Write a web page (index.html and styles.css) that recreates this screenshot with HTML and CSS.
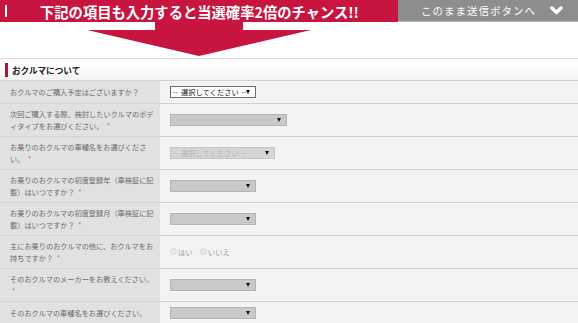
FILE: index.html
```html
<!DOCTYPE html>
<html lang="ja">
<head>
    <meta charset="UTF-8">
    <meta name="viewport" content="width=device-width, initial-scale=1.0">
    <title>おクルマについて</title>
    <link rel="stylesheet" href="styles.css">
</head>
<body>
    <div class="banner">
        <div class="banner-main"><span class="banner-mark"></span>下記の項目も入力すると当選確率2倍のチャンス!!</div>
        <a class="banner-jump" href="#submit">このまま送信ボタンへ<svg class="chevron" width="13" height="9" viewBox="0 0 13 9"><path d="M2 2 L6.5 6.5 L11 2" fill="none" stroke="#fff" stroke-width="3.4" stroke-linejoin="round" stroke-linecap="round"/></svg></a>
    </div>
    <div class="pointer">
        <svg width="224" height="34" viewBox="0 0 224 34"><rect x="68" y="0" width="88" height="9" fill="#c8153f"/><polygon points="0,8 224,8 112,34" fill="#c8153f"/></svg>
    </div>

    <div class="section-title"><span class="section-mark"></span>おクルマについて</div>
    <table class="fields">
        <tr>
            <th>おクルマのご購入予定はございますか？</th>
            <td><span class="select white w85"><select><option>-- 選択してください --</option></select></span></td>
        </tr>
        <tr>
            <th>次回ご購入する際、検討したいクルマのボディタイプをお選びください。 <span class="req">*</span></th>
            <td><span class="select w117"><select><option></option></select></span></td>
        </tr>
        <tr>
            <th>お乗りのおクルマの車種名をお選びください。 <span class="req">*</span></th>
            <td><span class="select w105"><select disabled><option>-- 選択してください --</option></select></span></td>
        </tr>
        <tr>
            <th>お乗りのおクルマの初度登録年（車検証に記載）はいつですか？ <span class="req">*</span></th>
            <td><span class="select w85"><select><option></option></select></span></td>
        </tr>
        <tr>
            <th>お乗りのおクルマの初度登録月（車検証に記載）はいつですか？ <span class="req">*</span></th>
            <td><span class="select w85"><select><option></option></select></span></td>
        </tr>
        <tr>
            <th>主にお乗りのおクルマの他に、おクルマをお持ちですか？ <span class="req">*</span></th>
            <td>
                <label class="radio"><input type="radio" name="other">はい</label>
                <label class="radio"><input type="radio" name="other">いいえ</label>
            </td>
        </tr>
        <tr>
            <th>そのおクルマのメーカーをお教えください。 <span class="req">*</span></th>
            <td><span class="select w85"><select><option></option></select></span></td>
        </tr>
        <tr>
            <th>そのおクルマの車種名をお選びください。</th>
            <td><span class="select w85"><select><option></option></select></span></td>
        </tr>
    </table>
</body>
</html>
```

FILE: styles.css
```css
body {
    margin: 0;
    font-family: "Noto Sans CJK JP", "Noto Sans", sans-serif;
    background: #fff;
    overflow: hidden;
}
.banner {
    display: flex;
    height: 22px;
}
.banner-main {
    width: 398px;
    background: #c8153f;
    color: #fff;
    font-size: 14.3px;
    font-weight: 700;
    display: flex;
    align-items: center;
    white-space: nowrap;
}
.banner-mark {
    width: 2px;
    height: 12px;
    background: #fff;
    margin: 0 33px 0 5px;
}
.banner-jump {
    flex: 1;
    background: #8d8d8d;
    border-bottom: 1px solid #b8b8b8;
    color: #fff;
    font-size: 10.5px;
    letter-spacing: 1px;
    display: flex;
    align-items: center;
    padding-left: 23px;
    text-decoration: none;
    white-space: nowrap;
}
.chevron {
    margin-left: 14px;
}
.pointer {
    width: 398px;
    height: 36px;
    display: flex;
    justify-content: center;
}
.section-title {
    height: 21px;
    border-top: 1px solid #dcdcdc;
    background: linear-gradient(#fff 30%, #f3f3f3);
    display: flex;
    align-items: center;
    padding-left: 5px;
    font-size: 8.6px;
    font-weight: 700;
    color: #222;
}
.section-mark {
    width: 3px;
    height: 14px;
    background: #a8173f;
    margin-right: 4px;
}
.fields {
    width: 100%;
    border-collapse: collapse;
}
.fields th {
    width: 146px;
    padding: 4px 4px 4px 10px;
    text-align: left;
    font-weight: 400;
    font-size: 7.2px;
    line-height: 12px;
    color: #6a6a6a;
    background: #e1e1e1;
    border-top: 1px solid #d2d2d2;
    vertical-align: middle;
}
.fields td {
    padding: 5px 10px;
    background: #f3f3f3;
    border-top: 1px solid #d2d2d2;
    vertical-align: middle;
    font-size: 7.2px;
    line-height: 12px;
}
.req {
    color: #e0456a;
    margin-left: 2px;
}
.select {
    position: relative;
    display: block;
    height: 12px;
}
.select select {
    display: block;
    appearance: none;
    -webkit-appearance: none;
    box-sizing: border-box;
    width: 100%;
    height: 12px;
    margin: 0;
    padding: 0 2px;
    border: 1px solid #b4b4b4;
    border-radius: 0;
    background: #c9c9c9;
    font-family: inherit;
    font-size: 7.2px;
    line-height: 10px;
    letter-spacing: 0.1px;
    word-spacing: 1px;
    color: #999;
}
.select::after {
    content: "";
    position: absolute;
    right: 6px;
    top: 4px;
    border-left: 2.5px solid transparent;
    border-right: 2.5px solid transparent;
    border-top: 4px solid #111;
}
.select.white select {
    background: #fff;
    border-color: #6a6a6a;
    color: #111;
}
.w85 { width: 86px; }
.w105 { width: 105px; }
.w117 { width: 117px; }
.radio {
    display: inline-flex;
    align-items: center;
    margin-right: 6px;
    color: #999;
}
.radio input {
    appearance: none;
    -webkit-appearance: none;
    width: 7px;
    height: 7px;
    margin: 0 1px 0 0;
    border: 1px solid #d6d6d6;
    border-radius: 50%;
    background: #e9e9e9;
}
```
